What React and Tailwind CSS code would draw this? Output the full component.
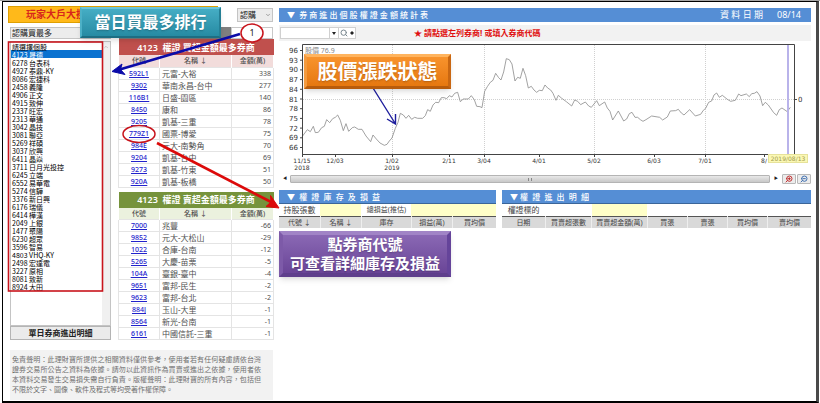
import { useState } from "react";
import { ChevronDown, ChevronUp, Search, ZoomIn, ZoomOut } from "lucide-react";

const STOCKS = [
	["4123", "晟德"],
	["6278", "台表科"],
	["4927", "泰鼎-KY"],
	["8086", "宏捷科"],
	["2458", "義隆"],
	["4906", "正文"],
	["4915", "致伸"],
	["2337", "旺宏"],
	["2313", "華通"],
	["3042", "晶技"],
	["3081", "聯亞"],
	["5269", "祥碩"],
	["3037", "欣興"],
	["6411", "晶焱"],
	["3711", "日月光投控"],
	["6245", "立端"],
	["6552", "易華電"],
	["5274", "信驊"],
	["3376", "新日興"],
	["6176", "瑞儀"],
	["6414", "樺漢"],
	["2049", "上銀"],
	["1477", "聚陽"],
	["6230", "超眾"],
	["3596", "智易"],
	["4803", "VHQ-KY"],
	["2498", "宏達電"],
	["3227", "原相"],
	["8081", "致新"],
	["8924", "大田"],
];

const BUYERS = [
	["592L1", "元富-大裕", 338],
	["9302", "華南永昌-台中", 277],
	["116B1", "日盛-園區", 140],
	["8450", "康和", 86],
	["9205", "凱基-三重", 78],
	["779Z1", "國票-博愛", 75],
	["984E", "元大-南勢角", 70],
	["9204", "凱基-台中", 69],
	["9273", "凱基-竹東", 51],
	["920A", "凱基-板橋", 50],
];

const SELLERS = [
	["7000", "兆豐", -66],
	["9852", "元大-大松山", -29],
	["1022", "合庫-台南", -12],
	["5265", "大慶-苗栗", -5],
	["104A", "臺銀-臺中", -4],
	["9651", "富邦-民生", -2],
	["9623", "富邦-台北", -2],
	["884J", "玉山-大里", -1],
	["8564", "新光-台南", -1],
	["6161", "中國信託-三重", -1],
];

const PRICE_TICKS = [96, 93, 90, 87, 84, 81, 78, 75, 72, 69, 66];

// the last label is cut short by the cursor's date tag
const DATE_TICKS = [
	{ x: 23, label: "11/15", year: "2018" },
	{ x: 56, label: "12/03" },
	{ x: 113, label: "1/02", year: "2019", grid: true },
	{ x: 170, label: "2/11" },
	{ x: 205, label: "3/04", grid: true },
	{ x: 260, label: "4/01" },
	{ x: 315, label: "5/02", grid: true },
	{ x: 375, label: "6/03" },
	{ x: 426, label: "7/01", grid: true },
	{ x: 485, label: "8/" },
];

// price line, in thirds of a chart unit
const LINE_H1 =
	"97,412 112,392 121,398 130,382 136,401 145,400 155,386 163,382 170,362 179,371 188,359 196,355 203,348 211,364 220,395 228,374 236,397 247,386 254,384 265,391 276,391 288,411 302,428 309,408 319,420 330,432 343,439 351,436 358,426 366,417 376,388 384,370 391,343 400,348 408,358 416,349 425,361 434,355 443,358 458,358 466,350 473,332 481,337 489,318 497,310 506,311 514,296 522,296 530,299 538,290 546,294 554,283 563,280 571,308 580,300 595,300 604,290 613,302 620,322 630,323 636,326 644,277 652,263 661,250 669,244 677,223 686,236 693,243 701,219 709,179 718,182 726,195 735,246 743,235 751,238 759,208 767,230 775,267 784,262 792,273 800,280 808,274 817,275 825,258";
const LINE_H2 =
	"0,258 8,267 17,273 24,283 33,304 40,289 49,297 64,308 80,321 89,303 98,307 107,317 121,309 131,321 139,325 155,305 163,320 179,309 187,327 195,337 203,363 220,336 236,366 245,360 253,344 261,340 270,355 278,355 286,362 294,367 303,362 320,351 344,355 353,363 367,354 376,336 392,335 400,331 409,342 417,348 434,332 451,351 467,346 475,334 482,328 491,310 500,306 507,288 515,282 523,295 532,289 547,301 557,307 571,304 581,285 588,290 604,285 613,293 620,284 628,283 636,278 645,291 653,320 661,310 670,318 686,341 695,349 703,332 711,327 727,338 736,325";

const BrokerTable = ({ title, rows, titleClass, headClass }) => (
	<table className="w-full table-fixed border-collapse text-[7px] leading-[11px] text-[#505050]">
		<colgroup>
			<col className="w-[41px]" />
			<col className="w-[72px]" />
			<col className="w-[42px]" />
		</colgroup>
		<thead>
			<tr>
				<th
					colSpan={3}
					className={`h-4 p-0 text-[9px] font-semibold whitespace-pre text-white ${titleClass}`}>
					{title}
				</th>
			</tr>
			<tr className={headClass}>
				<th className="h-3 border-x border-white p-0 font-medium">代號</th>
				<th className="h-3 border-x border-white p-0 font-medium">名稱 ↓</th>
				<th className="h-3 border-x border-white p-0 font-medium">金額(萬)</th>
			</tr>
		</thead>
		<tbody>
			{rows.map(([code, name, amount]) => (
				<tr key={code}>
					<td className="h-3 border border-[#e4e4e4] p-0 text-center">
						<a
							href={`#${code}`}
							className="font-medium text-[#2222cc] underline">
							{code}
						</a>
					</td>
					<td className="h-3 border border-[#e4e4e4] p-0 pl-0.5 text-[8px]">
						{name}
					</td>
					<td className="h-3 border border-[#e4e4e4] p-0 pr-0.5 text-right">
						{amount}
					</td>
				</tr>
			))}
		</tbody>
	</table>
);

const PriceChart = () => (
	<svg
		viewBox="0 0 532 133"
		className="block w-full"
		fontFamily="'DejaVu Sans', sans-serif"
		fontSize="7"
		fill="#333">
		{/* grid */}
		<line x1="24" x2="515" y1="58.5" y2="58.5" stroke="#d0d0d0" strokeDasharray="1 1" />
		{DATE_TICKS.filter((t) => t.grid).map((t) => (
			<line
				key={t.x}
				x1={t.x + 0.5}
				x2={t.x + 0.5}
				y1="4"
				y2="113"
				stroke="#d0d0d0"
				strokeDasharray="1 1"
			/>
		))}
		<text x="26" y="12" fontFamily="'Noto Sans', 'Noto Sans CJK TC', sans-serif" fill="#888">
			股價 76.9
		</text>

		{/* series */}
		<g fill="none" stroke="#8a8a8a" strokeWidth="2.4">
			<polyline points={LINE_H1} transform="translate(-9 -42) scale(.3333)" />
			<polyline points={LINE_H2} transform="translate(266 -42) scale(.3333)" />
		</g>

		{/* cursor */}
		<rect x="508" y="4" width="2" height="109" fill="#b9b3ea" />

		{/* frame and axes */}
		<path d="M23.5 113V3.5H515.5V113.5H23" fill="none" stroke="#444" />
		{PRICE_TICKS.map((p, i) => (
			<g key={p}>
				<line x1="21" x2="23" y1={9.5 + i * 9.7} y2={9.5 + i * 9.7} stroke="#444" />
				<text x="19" y={12 + i * 9.7} textAnchor="end">
					{p}
				</text>
			</g>
		))}
		{DATE_TICKS.map((t) => (
			<g key={t.x} textAnchor="middle" fontSize="6">
				<line x1={t.x + 0.5} x2={t.x + 0.5} y1="113" y2="116" stroke="#444" />
				<text x={t.x} y="122">
					{t.label}
				</text>
				{t.year && (
					<text x={t.x} y="129">
						{t.year}
					</text>
				)}
			</g>
		))}
		<line x1="516" x2="518" y1="58.5" y2="58.5" stroke="#444" />
		<text x="519" y="61">
			0
		</text>
		<rect x="489.500" y="113.500" width="39" height="8" fill="#fbf8b4" stroke="#e6e29a" />
		<text x="509" y="120" textAnchor="middle" fontSize="6" fill="#a09a50">
			2019/08/13
		</text>
	</svg>
);

const PanelTitle = ({ children }) => (
	<h2 className="h-3.5 border-b border-[#3a6599] bg-[#558ed5] pl-2 text-[8px] leading-[14px] font-medium whitespace-pre text-white">
		{children}
	</h2>
);

const HeadCell = ({ children }) => (
	<th className="h-3 border-x border-t border-x-[#eeeeee] border-t-[#555] bg-[#d9d9d9] p-0 font-normal whitespace-nowrap first:border-l-0 last:border-r-0">
		{children}
	</th>
);

const Annotations = () => (
	<>
		<svg
			className="pointer-events-none absolute top-0 left-0 z-10"
			width="460"
			height="300"
			fill="none">
			<rect x="5.500" y="40" width="94" height="249" stroke="#c8141c" strokeWidth="1.600" />
			<ellipse cx="136" cy="132" rx="16" ry="8.500" stroke="#c8141c" strokeWidth="1.500" />
			<path d="M237 32L115 68" stroke="#0b0ba8" strokeWidth="2.600" />
			<path d="M109 69.500L119 62L117.500 67.500L122 72.500Z" fill="#0b0ba8" stroke="#0b0ba8" />
			<ellipse cx="249" cy="31" rx="11" ry="9" fill="#fff" stroke="#c8141c" strokeWidth="1.500" />
			<path d="M154 141L270 201" stroke="#dc0a0a" strokeWidth="2.600" />
			<path d="M276 206L263 204.500L268 200L267.500 193.500Z" fill="#dc0a0a" stroke="#dc0a0a" />
			<path d="M370 86L392.500 122M384 117L392.500 122L392.500 112" stroke="#1c1c9c" strokeWidth="1.400" />
			<text x="249" y="34" textAnchor="middle" fontSize="9" fill="#222">
				1
			</text>
		</svg>
		<div className="absolute top-[5px] left-[77px] z-20 w-[141px] border-2 border-t-[#6cc5d8] border-r-[#257f95] border-b-[#1d6e83] border-l-[#4cb0c6] bg-linear-to-b from-[#45adc4] to-[#268ba3] text-center text-[16px] leading-[27px] font-bold text-white shadow-md text-shadow-sm">
			當日買最多排行
		</div>
		<div className="absolute top-[52px] left-[301px] z-20 w-[147px] border-3 border-t-[#ffb45e] border-r-[#c96712] border-b-[#b85c0c] border-l-[#f39a3e] bg-linear-to-b from-[#f8932c] to-[#e6780f] text-center text-[20px] leading-[29px] font-bold text-white shadow-md text-shadow-sm">
			股價漲跌狀態
		</div>
		<div className="absolute top-[229px] left-[276px] z-20 w-[172px] border-4 border-t-[#a184c6] border-r-[#65449a] border-b-[#5f3f8c] border-l-[#7d5aa8] bg-linear-to-b from-[#8a68b4] to-[#6a4597] text-center text-[15px] leading-[19px] font-bold text-white shadow-md text-shadow-sm">
			點券商代號
			<br />
			可查看詳細庫存及損益
		</div>
	</>
);

const Sidebar = () => {
	const [stock, setStock] = useState("4123");

	return (
		<aside className="w-[265px] shrink-0">
			<div className="flex h-[17px] items-center justify-between">
				<h1 className="h-full w-[210px] border border-[#e0a000] bg-[#ffb91a] pl-[17px] text-[10px] leading-[15px] font-bold text-[#d8261c]">
					玩家大戶大搜密
				</h1>
				<div className="relative">
					<select
						aria-label="權證類別"
						className="block h-3.5 w-9 appearance-none border border-[#c4c4c4] bg-[#ececec] pl-0.5 text-[8px] leading-3">
						<option>認購</option>
						<option>認售</option>
					</select>
					<ChevronDown className="pointer-events-none absolute top-1 right-0.5 size-1.5 text-[#555]" />
				</div>
			</div>
			<div className="mt-1 flex h-3 pl-0.5">
				<select
					aria-label="排行條件"
					className="block w-[101px] appearance-none border border-[#c4c4c4] bg-[#ececec] pl-px text-[8px] leading-[10px]">
					<option>認購買最多</option>
					<option>認購賣最多</option>
				</select>
				<div className="ml-2 flex-1 bg-[#7f7f7f]"></div>
				<div className="w-[42px] border border-[#c8c8c8] bg-white"></div>
			</div>

			<div className="flex justify-between pl-0.5">
				<div className="mt-0.5 flex w-[101px] flex-col">
					<div className="flex flex-1 border border-[#c4c4c4] bg-white">
						<select
							aria-label="個股清單"
							size={31}
							value={stock}
							onChange={(e) => setStock(e.target.value)}
							className="block h-full min-w-0 flex-1 overflow-hidden font-['Noto_Sans_CJK_TC',sans-serif] text-[7px] text-black outline-none">
							<option value="" className="h-2 min-h-0 p-0 pl-px leading-1.5">
								請選擇個股
							</option>
							{STOCKS.map(([code, name]) => (
								<option
									key={code}
									value={code}
									className="h-2 min-h-0 p-0 pl-px leading-1.5 checked:bg-[linear-gradient(#0a72d0,#0a72d0)] checked:[-webkit-text-fill-color:white]">
									{`${code}\u00a0${name}`}
								</option>
							))}
						</select>
						<div className="w-2 bg-[#f0f0f0]">
							<ChevronUp className="mx-auto mt-0.5 size-1.5 text-[#999]" />
						</div>
					</div>
					<button className="h-3.5 border border-[#b4b4b4] bg-[#ebebeb] text-[8px] leading-3 font-bold text-[#222]">
						單日券商進出明細
					</button>
				</div>
				<div className="flex w-[155px] flex-col gap-1">
					<BrokerTable
						title="4123  權證 買超金額最多券商"
						rows={BUYERS}
						titleClass="bg-[#c0504d]"
						headClass="bg-[#f2dcdb]"
					/>
					<BrokerTable
						title="4123  權證 賣超金額最多券商"
						rows={SELLERS}
						titleClass="bg-[#76933c]"
						headClass="bg-[#ebf1de]"
					/>
				</div>
			</div>

			<p className="mt-2.5 ml-0.5 bg-[#f2f2f2] py-[5px] pr-3 pl-0.5 text-justify text-[7px] leading-[10px] text-[#707070]">
				免責聲明：此理財寶所提供之相關資料僅供參考，使用者若有任何疑慮請依台灣證券交易所公告之資料為依據。請勿以此資訊作為買賣或進出之依據，使用者依本資料交易發生交易損失需自行負責。版權聲明：此理財寶的所有內容，包括但不限於文字、圖像、軟件及程式等均受著作權保障。
			</p>
		</aside>
	);
};

const Toolbar = () => (
	<div className="mt-[3px] flex h-4 items-center bg-[#f2f2f2] pl-px">
		<input
			aria-label="券商代碼"
			className="h-3 w-[50px] border border-[#d0d0d0] bg-white px-0.5 text-[8px]"
		/>
		<button
			aria-label="選擇券商"
			className="flex h-3 w-2 items-center justify-center border-y border-[#d0d0d0] bg-white">
			<svg viewBox="0 0 4 3" className="h-[3px] w-1" fill="#222">
				<path d="M0 0H4L2 3Z" />
			</svg>
		</button>
		<button
			aria-label="搜尋"
			className="flex h-3 w-2.5 items-center justify-center border border-r-0 border-[#d0d0d0] bg-white">
			<Search className="size-2 text-[#7a8890]" strokeWidth={3} />
		</button>
		<button
			aria-label="移動"
			className="flex h-3 w-2 items-center justify-center border border-l-0 border-[#d0d0d0] bg-white">
			<svg viewBox="0 0 4 4" className="size-1" fill="#222">
				<path d="M2 0L4 2L2 4L0 2Z" />
			</svg>
		</button>
		<p className="ml-[58px] text-[8px] font-bold whitespace-nowrap text-[#e01010]">
			★ 請點選左列券商! 或填入券商代碼
		</p>
	</div>
);

const ChartScroller = () => (
	<div className="flex h-2.5 items-center pl-px text-[4px] leading-none">
		<span className="w-2.5 text-center">◀</span>
		<div className="flex h-2 flex-1 items-center justify-center rounded-[1px] border border-[#b4b4b4] bg-linear-to-b from-[#e8e8e8] to-[#c8c8c8]">
			<span className="h-[3px] w-1 border-x border-[#888]"></span>
		</div>
		<span className="w-3 text-center">▶</span>
		<button
			aria-label="放大"
			className="flex h-2.5 w-3.5 items-center justify-center rounded-[1px] border border-[#b8b8b8] bg-[#ececec]">
			<ZoomIn className="size-2 -scale-x-100 text-[#c03030]" strokeWidth={3} />
		</button>
		<button
			aria-label="縮小"
			className="ml-px flex h-2.5 w-3.5 items-center justify-center rounded-[1px] border border-[#b8b8b8] bg-[#ececec]">
			<ZoomOut className="size-2 -scale-x-100 text-[#4070b0]" strokeWidth={3} />
		</button>
	</div>
);

export default function App() {
	return (
		<div className="border-t border-[#a6a6a6] bg-white pr-px pl-0.5 font-['Noto_Sans','Noto_Sans_CJK_TC',sans-serif] text-[#222]">
			<div className="relative flex gap-1.5 border-t border-r-3 border-b-2 border-l border-t-black border-r-[#4a4a4a] border-b-black border-l-black pt-1 pr-[5px] pb-px pl-[5px]">
				<Sidebar />
				<main className="min-w-0 flex-1 pt-0.5">
					<div className="flex h-3.5 items-center justify-between bg-[#558ed5] pr-2.5 pl-2 font-medium text-white">
						<h2 className="text-[8px] whitespace-pre">
							▼  券 商 進 出 個 股 權 證 金 額 統 計 表
						</h2>
						<p className="text-[9px] leading-3 font-normal whitespace-pre">
							資 料 日 期      08/14
						</p>
					</div>
					<Toolbar />
					<PriceChart />
					<ChartScroller />

					<div className="mt-1.5 grid grid-cols-[217fr_309fr] gap-1.5">
						<section className="min-w-0">
							<PanelTitle>{"▼  權  證  庫  存  及  損  益"}</PanelTitle>
							<table className="w-full table-fixed border-collapse text-center text-[7px] leading-[11px] text-[#444]">
								<colgroup>
									<col className="w-[19%]" />
									<col className="w-[19%]" />
									<col className="w-[23%]" />
									<col className="w-[19%]" />
									<col className="w-[20%]" />
								</colgroup>
								<tbody>
									<tr className="text-[8px]">
										<td className="h-3 p-0 whitespace-nowrap">持股張數</td>
										<td className="bg-[#ffffc8] p-0"></td>
										<td className="p-0 text-[7px] whitespace-nowrap">總損益(推估)</td>
										<td colSpan={2} className="bg-[#ffffc8] p-0"></td>
									</tr>
									<tr>
										<HeadCell>代號 ↓</HeadCell>
										<HeadCell>名稱 ↓</HeadCell>
										<HeadCell>庫存</HeadCell>
										<HeadCell>損益(萬)</HeadCell>
										<HeadCell>買均價</HeadCell>
									</tr>
								</tbody>
							</table>
						</section>
						<section className="min-w-0">
							<PanelTitle>{"▼ 權  證  進  出  明  細"}</PanelTitle>
							<table className="w-full table-fixed border-collapse text-center text-[7px] leading-[11px] text-[#444]">
								<colgroup>
									<col className="w-[14%]" />
									<col className="w-[15%]" />
									<col className="w-[18%]" />
									<col className="w-[13%]" />
									<col className="w-[13%]" />
									<col className="w-[13%]" />
									<col className="w-[14%]" />
								</colgroup>
								<tbody>
									<tr className="text-[8px]">
										<td className="h-3 p-0 whitespace-nowrap">權證標的</td>
										<td className="p-0"></td>
										<td className="bg-[#ffffc8] p-0"></td>
										<td colSpan={4} className="p-0"></td>
									</tr>
									<tr>
										<HeadCell>日期</HeadCell>
										<HeadCell>買賣超張數</HeadCell>
										<HeadCell>買賣超金額(萬)</HeadCell>
										<HeadCell>買張</HeadCell>
										<HeadCell>賣張</HeadCell>
										<HeadCell>買均價</HeadCell>
										<HeadCell>賣均價</HeadCell>
									</tr>
								</tbody>
							</table>
						</section>
					</div>
				</main>
				<Annotations />
			</div>
		</div>
	);
}
